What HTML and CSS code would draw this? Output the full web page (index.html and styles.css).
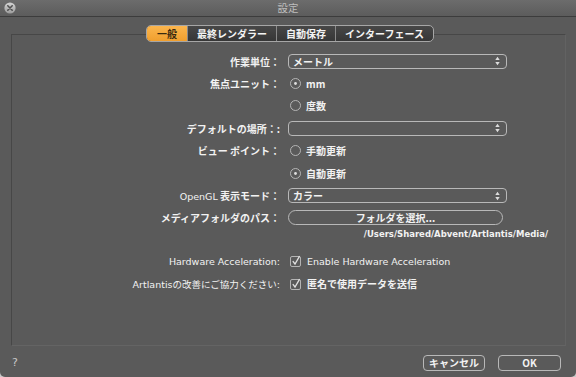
FILE: index.html
```html
<!DOCTYPE html>
<html lang="ja">
<head>
<meta charset="utf-8">
<title>設定</title>
<link rel="stylesheet" href="styles.css">
</head>
<body>
<div class="window">
  <div class="titlebar">
    <span class="close">
      <svg width="12" height="12" viewBox="0 0 12 12">
        <defs><linearGradient id="cg" x1="0" y1="0" x2="0" y2="1"><stop offset="0" stop-color="#d4d4d4"/><stop offset="1" stop-color="#9c9c9c"/></linearGradient></defs>
        <circle cx="6" cy="6" r="5.6" fill="url(#cg)"/>
        <path d="M3.8 3.8 L8.2 8.2 M8.2 3.8 L3.8 8.2" stroke="#505050" stroke-width="1.6" stroke-linecap="round"/>
      </svg>
    </span>
    <span class="title">設定</span>
    <span></span>
  </div>

  <div class="tabs">
    <span class="tab active">一般</span>
    <span class="tab">最終レンダラー</span>
    <span class="tab">自動保存</span>
    <span class="tab">インターフェース</span>
  </div>

  <div class="panel">
    <div class="row">
      <span class="label">作業単位：</span>
      <span class="select"><span class="sel-text">メートル</span>
        <svg class="arrows" width="5" height="10" viewBox="0 0 5 10"><path d="M0.3 4 L2.5 0.8 L4.7 4Z M0.3 6 L2.5 9.2 L4.7 6Z" fill="#dcdcdc"/></svg>
      </span>
    </div>
    <div class="row">
      <span class="label">焦点ユニット：</span>
      <span class="option">
        <svg class="radio" width="11" height="11" viewBox="0 0 11 11"><circle cx="5.5" cy="5.5" r="5" fill="none" stroke="#b4b4b4" stroke-width="1"/><circle cx="5.5" cy="5.5" r="1.4" fill="#e0e0e0"/></svg>
        <span class="opt-text">mm</span>
      </span>
    </div>
    <div class="row">
      <span class="label"></span>
      <span class="option">
        <svg class="radio" width="11" height="11" viewBox="0 0 11 11"><circle cx="5.5" cy="5.5" r="5" fill="none" stroke="#b4b4b4" stroke-width="1"/></svg>
        <span class="opt-text">度数</span>
      </span>
    </div>
    <div class="row">
      <span class="label">デフォルトの場所：:</span>
      <span class="select"><span class="sel-text"></span>
        <svg class="arrows" width="5" height="10" viewBox="0 0 5 10"><path d="M0.3 4 L2.5 0.8 L4.7 4Z M0.3 6 L2.5 9.2 L4.7 6Z" fill="#dcdcdc"/></svg>
      </span>
    </div>
    <div class="row">
      <span class="label">ビュー ポイント：</span>
      <span class="option">
        <svg class="radio" width="11" height="11" viewBox="0 0 11 11"><circle cx="5.5" cy="5.5" r="5" fill="none" stroke="#b4b4b4" stroke-width="1"/></svg>
        <span class="opt-text">手動更新</span>
      </span>
    </div>
    <div class="row">
      <span class="label"></span>
      <span class="option">
        <svg class="radio" width="11" height="11" viewBox="0 0 11 11"><circle cx="5.5" cy="5.5" r="5" fill="none" stroke="#b4b4b4" stroke-width="1"/><circle cx="5.5" cy="5.5" r="1.4" fill="#e0e0e0"/></svg>
        <span class="opt-text">自動更新</span>
      </span>
    </div>
    <div class="row">
      <span class="label"><span class="lat">OpenGL</span> 表示モード：</span>
      <span class="select"><span class="sel-text">カラー</span>
        <svg class="arrows" width="5" height="10" viewBox="0 0 5 10"><path d="M0.3 4 L2.5 0.8 L4.7 4Z M0.3 6 L2.5 9.2 L4.7 6Z" fill="#dcdcdc"/></svg>
      </span>
    </div>
    <div class="row">
      <span class="label">メディアフォルダのパス：</span>
      <span class="pill">フォルダを選択...</span>
    </div>
    <div class="row path-row">
      <span class="label"></span>
      <span class="path">/Users/Shared/Abvent/Artlantis/Media/</span>
    </div>
    <div class="row first-check">
      <span class="label latin">Hardware Acceleration:</span>
      <span class="option">
        <svg class="check" width="12" height="12" viewBox="0 0 12 12"><rect x="0.5" y="1.5" width="10" height="10" rx="1.5" fill="none" stroke="#b4b4b4"/><path d="M2.8 6.2 L5 9 L9.6 1.2" fill="none" stroke="#e0e0e0" stroke-width="1.3"/></svg>
        <span class="opt-text latin-light">Enable Hardware Acceleration</span>
      </span>
    </div>
    <div class="row">
      <span class="label latin">Artlantisの改善にご協力ください:</span>
      <span class="option">
        <svg class="check" width="12" height="12" viewBox="0 0 12 12"><rect x="0.5" y="1.5" width="10" height="10" rx="1.5" fill="none" stroke="#b4b4b4"/><path d="M2.8 6.2 L5 9 L9.6 1.2" fill="none" stroke="#e0e0e0" stroke-width="1.3"/></svg>
        <span class="opt-text">匿名で使用データを送信</span>
      </span>
    </div>
  </div>

  <div class="footer">
    <span class="help">?</span>
    <span class="buttons">
      <span class="btn cancel">キャンセル</span>
      <span class="btn ok">OK</span>
    </span>
  </div>
</div>
</body>
</html>
```

FILE: styles.css
```css
html {
  background: #c9c9c9;
}
body {
  margin: 0;
  width: 576px;
  height: 377px;
  overflow: hidden;
  font-family: "DejaVu Sans", "Noto Sans CJK JP", sans-serif;
  font-size: 10px;
  color: #f2f2f2;
}
.window {
  width: 576px;
  height: 377px;
  background: #5a5a5a;
  border-radius: 0 0 5px 5px;
  display: flex;
  flex-direction: column;
}
.titlebar {
  height: 16px;
  flex: none;
  border-bottom: 1px solid #3c3c3c;
  background: linear-gradient(#6c6c6c, #5c5c5c);
  display: grid;
  grid-template-columns: 1fr auto 1fr;
  align-items: center;
}
.close {
  padding-left: 4px;
  display: flex;
  align-items: center;
  height: 16px;
}
.title {
  font-family: "Noto Sans CJK JP", sans-serif;
  font-size: 10.5px;
  color: #bdbdbd;
  line-height: 16px;
}
.tabs {
  align-self: flex-start;
  flex: none;
  margin: 8px 0 -8px 146px;
  height: 15px;
  display: flex;
  border: 1px solid #a6a6a6;
  border-radius: 5px;
  background: linear-gradient(#474747, #363636);
  overflow: hidden;
  position: relative;
  z-index: 1;
}
.tab {
  font-family: "Noto Sans CJK JP", sans-serif;
  font-weight: bold;
  font-size: 10px;
  line-height: 15px;
  padding: 0 9px;
  color: #f4f4f4;
  border-left: 1px solid #8a8a8a;
}
.tab:first-child {
  border-left: none;
}
.tab.active {
  background: linear-gradient(#fbb54d, #f09f2e);
  color: #3a2a10;
  padding: 0 10px;
}
.panel {
  flex: none;
  box-sizing: border-box;
  margin: 0 10px 0 11px;
  height: 312px;
  border: 1px solid;
  border-color: #474747 #626262 #646464 #474747;
  padding-top: 15px;
  display: flex;
  flex-direction: column;
}
.row {
  height: 22.4px;
  display: grid;
  grid-template-columns: 268px 262px;
  column-gap: 8px;
  align-items: center;
  flex: none;
}
.label {
  text-align: right;
  font-family: "Noto Sans CJK JP", sans-serif;
  font-weight: bold;
  white-space: nowrap;
}
.lat {
  font-family: "DejaVu Sans", sans-serif;
  font-weight: normal;
  font-size: 9.5px;
}
.label.latin {
  font-family: "DejaVu Sans", "Noto Sans CJK JP", sans-serif;
  font-weight: normal;
  font-size: 9.5px;
}
.select {
  height: 13px;
  border: 1px solid #b8b8b8;
  border-radius: 4px;
  display: flex;
  align-items: center;
  justify-content: space-between;
  padding: 0 6px 0 4px;
  box-sizing: content-box;
  width: 207px;
}
.sel-text {
  font-family: "Noto Sans CJK JP", sans-serif;
  font-weight: bold;
  line-height: 13px;
}
.option {
  display: flex;
  align-items: center;
  padding-left: 2px;
  gap: 5px;
}
.opt-text {
  font-family: "Noto Sans CJK JP", sans-serif;
  font-weight: bold;
}
.opt-text.latin-light {
  font-family: "DejaVu Sans", sans-serif;
  font-weight: normal;
  font-size: 9.5px;
}
.pill {
  width: 213px;
  height: 13px;
  border: 1px solid #b8b8b8;
  border-radius: 8px;
  text-align: center;
  line-height: 13px;
  font-family: "Noto Sans CJK JP", sans-serif;
  font-weight: bold;
}
.path-row {
  height: 10px;
}
.path {
  text-align: right;
  font-family: "DejaVu Sans", sans-serif;
  font-weight: bold;
  font-size: 8.5px;
  padding-right: 2px;
}
.first-check {
  margin-top: 11px;
}
.footer {
  flex: 1;
  display: flex;
  align-items: center;
  justify-content: space-between;
  padding: 2px 15px 0 12px;
}
.help {
  font-family: "DejaVu Sans", sans-serif;
  font-size: 11px;
  color: #c8c8c8;
}
.buttons {
  display: flex;
  gap: 13px;
}
.btn {
  height: 14px;
  border: 1px solid #b8b8b8;
  border-radius: 4px;
  text-align: center;
  line-height: 14px;
  font-family: "Noto Sans CJK JP", sans-serif;
  font-weight: bold;
}
.cancel {
  width: 60px;
}
.ok {
  width: 61px;
}
```
